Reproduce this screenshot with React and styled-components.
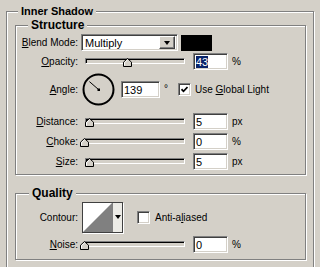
import React from 'react';
import styled, { createGlobalStyle, css } from 'styled-components';

const GlobalStyle = createGlobalStyle`
  body {
    margin: 0;
    background: #d4d0c8;
    color: #000;
    font-family: "Liberation Sans", Arial, sans-serif;
    overflow: hidden;
  }
`;

const sunken = css`
  box-sizing: border-box;
  border: 1px solid;
  border-color: #808080 #fff #fff #808080;
  box-shadow: inset 1px 1px 0 #404040, inset -1px -1px 0 #d4d0c8;
`;

const Page = styled.div`
  width: 320px;
  height: 267px;
  box-sizing: border-box;
  padding: 5px 0 0 6px;
  overflow: hidden;
`;

const Group = styled.fieldset`
  box-sizing: border-box;
  width: ${p => p.$width}px;
  height: ${p => (p.$height ? `${p.$height}px` : 'auto')};
  min-width: 0;
  margin: ${p => p.$top || 0}px 0 0;
  padding: ${p => p.$pad};
  border: 1px solid #808080;
  box-shadow: inset 1px 1px 0 #fff, 1px 1px 0 #fff;
  display: flex;
  flex-direction: column;
`;

const Legend = styled.legend`
  margin-left: ${p => p.$indent}px;
  padding: 0 3px;
  font-size: ${p => p.$size}px;
  line-height: ${p => p.$line}px;
  font-weight: bold;
  background: #d4d0c8;
`;

const Row = styled.div`
  display: flex;
  align-items: center;
  height: ${p => p.$h || 16}px;
  margin-top: ${p => p.$mt || 0}px;
`;

const Label = styled.span`
  flex: none;
  width: 62px;
  margin-right: ${p => p.$gap ?? 3}px;
  text-align: right;
  font-size: 10px;
  white-space: nowrap;
`;

const Text = styled.span`
  font-size: 10px;
  white-space: nowrap;
  margin-left: ${p => p.$ml || 0}px;
  align-self: ${p => (p.$top ? 'flex-start' : 'center')};
  margin-top: ${p => (p.$top ? 10 : 0)}px;
`;

const Key = styled.u`
  text-decoration: underline;
`;

const Select = styled.div`
  ${sunken};
  width: 97px;
  height: 17px;
  background: #fff;
  display: flex;
  align-items: center;
  justify-content: space-between;
  padding: 0 2px 0 3px;
  font-size: 11px;
`;

const ArrowButton = styled.span`
  box-sizing: border-box;
  width: 16px;
  height: 13px;
  border: 1px solid;
  border-color: #fff #404040 #404040 #fff;
  box-shadow: inset -1px -1px 0 #808080;
  background: #d4d0c8;
  display: flex;
  align-items: center;
  justify-content: center;
`;

const Arrow = styled.span`
  width: 0;
  height: 0;
  border-left: 3px solid transparent;
  border-right: 3px solid transparent;
  border-top: 4px solid #000;
`;

const Swatch = styled.div`
  width: 31px;
  height: 16px;
  margin-left: 3px;
  background: #000;
`;

const Slider = styled.div`
  position: relative;
  flex: none;
  width: 107px;
  height: 16px;
  box-sizing: border-box;
  padding-top: 5px;
`;

const Track = styled.div`
  box-sizing: border-box;
  height: 6px;
  margin: 0 3px 0 4px;
  border: 1px solid;
  border-color: #808080 #fff #fff #808080;
  box-shadow: inset 1px 1px 0 #000;
  background: #d4d0c8;
`;

const Thumb = styled.svg`
  position: absolute;
  top: 5px;
  display: block;
`;

const NumBox = styled.div`
  ${sunken};
  flex: none;
  width: ${p => p.$w || 35}px;
  height: 17px;
  margin-left: ${p => p.$ml || 0}px;
  background: #fff;
  font-size: 11px;
  line-height: 13px;
  padding: 2px 0 0 2px;
`;

const Selected = styled.span`
  background: #0a246a;
  color: #fff;
`;

const Unit = styled.span`
  margin-left: 4px;
  font-size: 10px;
`;

const Dial = styled.svg`
  display: block;
  flex: none;
  margin-left: 1px;
`;

const Check = styled.span`
  ${sunken};
  flex: none;
  width: 13px;
  height: 13px;
  margin-left: ${p => p.$ml || 0}px;
  background: #fff;
  display: flex;
  align-items: center;
  justify-content: center;
`;

const ContourBox = styled.div`
  box-sizing: border-box;
  display: flex;
  flex: none;
  width: 41px;
  height: 31px;
  margin-left: 1px;
  border: 1px solid #404040;
  box-shadow: 1px 1px 0 #fff;
  background: #fff;
`;

const ContourArrow = styled.div`
  flex: 1;
  display: flex;
  justify-content: center;
  padding-top: 12px;
  border-left: 1px solid #808080;
  background: #ecebe6;
`;

const SliderControl = ({ value }) => (
  <Slider>
    <Track />
    <Thumb width="9" height="9" viewBox="0 0 9 9" style={{ left: value * 1.01 - 1.5 }}>
      <path d="M0.5 8.5V4.2L4.5 0.5L8.5 4.2V8.5Z" fill="#d4d0c8" stroke="#000" />
      <path d="M1.5 7.5V4.6L4.5 1.9" fill="none" stroke="#fff" />
    </Thumb>
  </Slider>
);

const SliderRow = ({ label, value, text, unit, mt }) => (
  <Row $mt={mt}>
    <Label>{label}</Label>
    <SliderControl value={value} />
    <NumBox $ml={5}>{text}</NumBox>
    <Unit>{unit}</Unit>
  </Row>
);

const CheckMark = () => (
  <svg width="7" height="7" viewBox="0 0 7 7">
    <path d="M0.5 3.2L2.5 5.3L6.5 1" fill="none" stroke="#000" strokeWidth="1.7" />
  </svg>
);

const App = () => {
  const angle = (139 * Math.PI) / 180;
  const ex = 16.5 + Math.cos(angle) * 12;
  const ey = 16.5 - Math.sin(angle) * 12;

  return (
    <Page>
      <GlobalStyle />
      <Group $width={308} $height={290} $pad="0 0 0 8px">
        <Legend $indent={3} $size={11} $line={13}>Inner Shadow</Legend>

        <Group $width={291} $pad="1px 0 5px 0">
          <Legend $indent={12} $size={12} $line={15}>Structure</Legend>
          <Row $h={17}>
            <Label><Key>B</Key>lend Mode:</Label>
            <Select>
              Multiply
              <ArrowButton><Arrow /></ArrowButton>
            </Select>
            <Swatch />
          </Row>
          <Row $mt={2}>
            <Label><Key>O</Key>pacity:</Label>
            <SliderControl value={43} />
            <NumBox $ml={5}><Selected>43</Selected></NumBox>
            <Unit>%</Unit>
          </Row>
          <Row $h={33} $mt={4}>
            <Label><Key>A</Key>ngle:</Label>
            <Dial width="33" height="33" viewBox="0 0 33 33">
              <circle cx="16.5" cy="16.5" r="15" fill="none" stroke="#000" strokeWidth="2" />
              <line x1="16.5" y1="16.5" x2={ex} y2={ey} stroke="#000" strokeWidth="1" />
              <rect x="15.5" y="15.5" width="2.5" height="2.5" fill="#000" />
            </Dial>
            <NumBox $w={39} $ml={6}>139</NumBox>
            <Text $ml={4} $top>°</Text>
            <Check $ml={10}><CheckMark /></Check>
            <Text $ml={4}>Use <Key>G</Key>lobal Light</Text>
          </Row>
          <SliderRow mt={7} label={<><Key>D</Key>istance:</>} value={5} text="5" unit="px" />
          <SliderRow mt={4} label={<><Key>C</Key>hoke:</>} value={0} text="0" unit="%" />
          <SliderRow mt={4} label={<><Key>S</Key>ize:</>} value={5} text="5" unit="px" />
        </Group>

        <Group $width={291} $top={11} $pad="1px 0 7px 0">
          <Legend $indent={13} $size={12} $line={15}>Quality</Legend>
          <Row $h={31}>
            <Label>Contour:</Label>
            <ContourBox>
              <svg width="29" height="29" viewBox="0 0 29 29">
                <polygon points="0,29 29,0 29,29" fill="#808080" />
              </svg>
              <ContourArrow><Arrow /></ContourArrow>
            </ContourBox>
            <Check $ml={14} />
            <Text $ml={5}>Anti-a<Key>l</Key>iased</Text>
          </Row>
          <SliderRow mt={3} label={<><Key>N</Key>oise:</>} value={0} text="0" unit="%" />
        </Group>
      </Group>
    </Page>
  );
};

export default App;
